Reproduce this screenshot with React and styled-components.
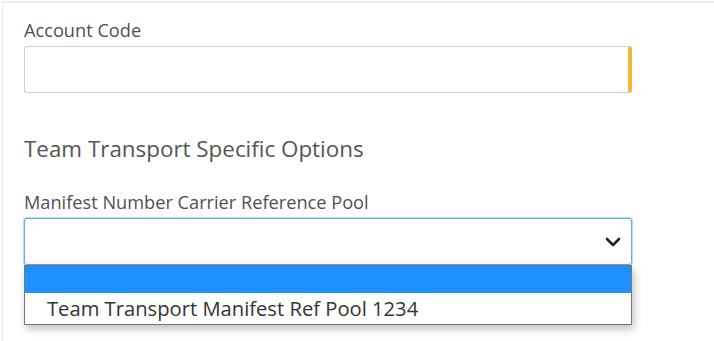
import React from 'react';
import styled, { createGlobalStyle } from 'styled-components';

const GlobalStyle = createGlobalStyle`
  html, body {
    margin: 0;
    padding: 0;
    background: #fff;
  }
  body {
    font-family: 'Open Sans', 'Noto Sans', sans-serif;
  }
`;

const Panel = styled.div`
  margin: 1px 0 0 2px;
  border-top: 2px solid #e9edf2;
  border-left: 1px solid #e3e8ee;
  padding: 15px 0 40px 21px;
  min-height: 340px;
  box-sizing: border-box;
`;

const Field = styled.div`
  width: 608px;
  position: relative;
`;

const Label = styled.div`
  font-size: 18.2px;
  line-height: 24px;
  color: #505050;
  margin-bottom: 4px;
`;

const TextInput = styled.div`
  height: 47px;
  box-sizing: border-box;
  border: 1px solid #cfcfcf;
  border-right: 4px solid #f5b635;
  border-radius: 3px;
  background: #fff;
`;

const Heading = styled.h3`
  margin: 41px 0 26px;
  font-size: 22.4px;
  line-height: 30px;
  font-weight: 400;
  color: #555;
`;

const SelectBox = styled.div`
  height: 47px;
  box-sizing: border-box;
  border: 1px solid #66afe9;
  box-shadow: 0 0 0 1px rgba(102, 175, 233, 0.45);
  border-radius: 3px;
  background: #fff;
  display: flex;
  align-items: center;
  justify-content: flex-end;
  padding-right: 10px;
`;

const Chevron = () => (
  <svg width="16" height="10" viewBox="0 0 16 10">
    <path d="M2 2 L8 8 L14 2" fill="none" stroke="#222" strokeWidth="2.6" strokeLinecap="round" strokeLinejoin="round" />
  </svg>
);

const OptionList = styled.ul`
  position: absolute;
  left: 0;
  right: 0;
  top: 100%;
  margin: 0;
  padding: 0;
  list-style: none;
  background: #fff;
  border: 1px solid #767676;
  box-shadow: 2px 4px 8px rgba(0, 0, 0, 0.25);
`;

const Option = styled.li`
  height: ${(p) => p.$height}px;
  padding-left: 22px;
  font-size: 20.2px;
  line-height: ${(p) => p.$height}px;
  color: #333;
  background: ${(p) => (p.$selected ? '#1e90ff' : '#fff')};
`;

export default function App() {
  return (
    <>
      <GlobalStyle />
      <Panel>
        <Field>
          <Label>Account Code</Label>
          <TextInput />
        </Field>
        <Heading>Team Transport Specific Options</Heading>
        <Field>
          <Label>Manifest Number Carrier Reference Pool</Label>
          <SelectBox>
            <Chevron />
          </SelectBox>
          <OptionList>
            <Option $selected $height={27} />
            <Option $height={31}>Team Transport Manifest Ref Pool 1234</Option>
          </OptionList>
        </Field>
      </Panel>
    </>
  );
}
